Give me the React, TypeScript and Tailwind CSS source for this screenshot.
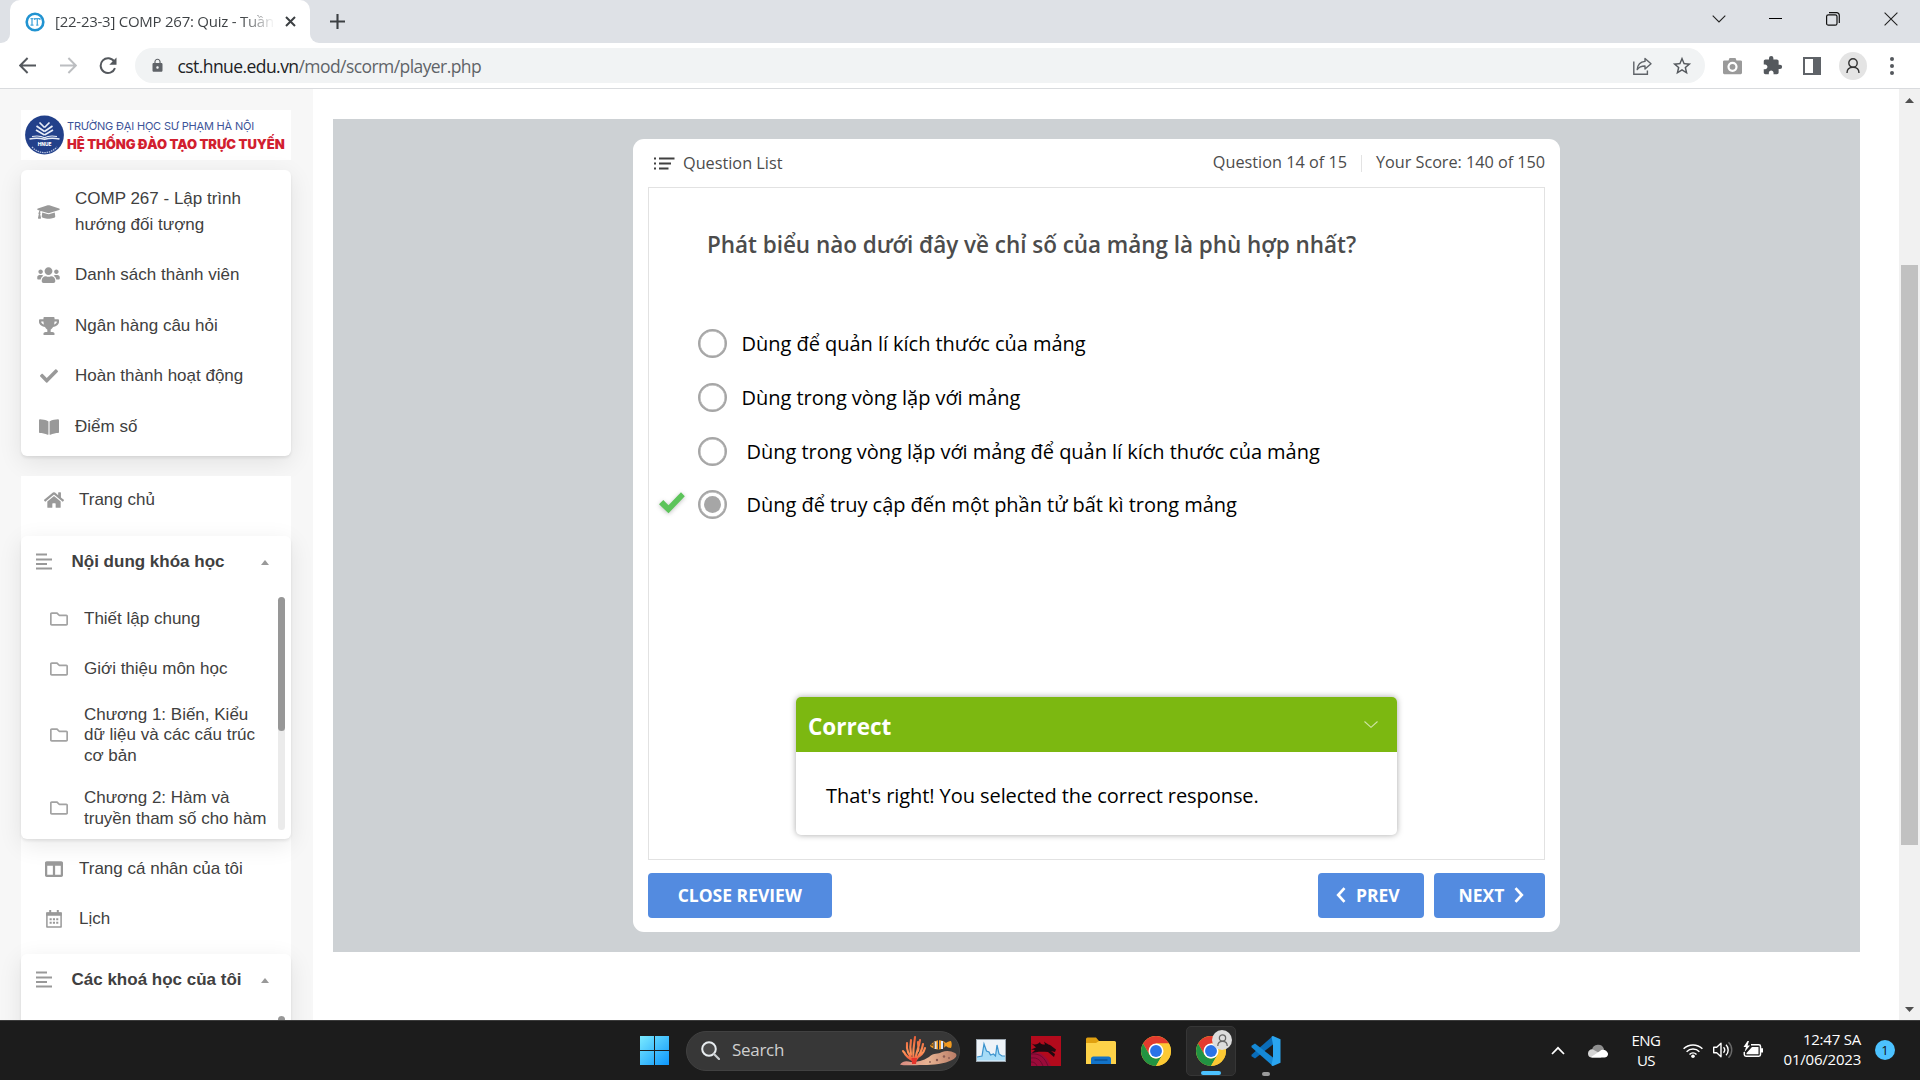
import React from "react";
import type { ReactNode } from "react";
import {
  FaBookOpen,
  FaCheck,
  FaColumns,
  FaGraduationCap,
  FaHome,
  FaRegFolder,
  FaTrophy,
  FaUsers,
} from "react-icons/fa";
import { MdExtension, MdLock, MdStarBorder } from "react-icons/md";

/* ---------- Browser chrome ---------- */

function TabStrip() {
  return (
    <div className="flex h-[43px] shrink-0 bg-[#dee1e6]">
      <div className="flex w-[10px] bg-white">
        <div className="w-full rounded-br-[9px] bg-[#dee1e6]" />
      </div>
      <div className="flex w-[300px] items-center rounded-t-[10px] bg-white pl-[15px]">
        <svg className="h-5 w-5 shrink-0" viewBox="0 0 20 20">
          <circle cx="10" cy="10" r="8.3" fill="#fff" stroke="#2193d1" strokeWidth="2.6" />
          <path d="M5.5 6.6h3M7 6.6v6.6M5.5 13.2h3M9.7 8V6.6h5.2V8M12.3 6.6v6.6M11.2 13.2h2.2" stroke="#48a7dc" strokeWidth="1.3" fill="none" />
        </svg>
        <span className="mb-[2px] ml-[10px] w-[220px] overflow-hidden bg-linear-to-r from-[#3c4043] from-85% to-transparent bg-clip-text text-[15px] leading-[22px] tracking-[-0.25px] whitespace-nowrap text-transparent">
          [22-23-3] COMP 267: Quiz - Tuần
        </span>
        <svg className="ml-[9.5px] h-[11px] w-[11px] shrink-0" viewBox="0 0 11 11">
          <path d="M1 1l9 9M10 1l-9 9" stroke="#3c4043" strokeWidth="2" />
        </svg>
      </div>
      <div className="flex w-[12px] bg-white">
        <div className="w-full rounded-bl-[9px] bg-[#dee1e6]" />
      </div>
      <svg className="mt-[14px] ml-[8px] h-[15px] w-[15px]" viewBox="0 0 15 15">
        <path d="M7.5 0v15M0 7.5h15" stroke="#3c4043" strokeWidth="2.1" />
      </svg>
      <div className="ml-auto flex h-[37px] items-center pr-[22px]">
        <svg className="h-[14px] w-[14px]" viewBox="0 0 14 14">
          <path d="M.7 3.7L7 10l6.3-6.3" stroke="#222" strokeWidth="1.1" fill="none" />
        </svg>
        <div className="ml-[43px] h-px w-[13px] bg-black" />
        <svg className="ml-[44px] h-[14px] w-[14px]" viewBox="0 0 14 14">
          <rect x=".6" y="2.8" width="10.4" height="10.4" rx="1.8" stroke="#111" strokeWidth="1.2" fill="none" />
          <path d="M3 .7h7.6a2.6 2.6 0 0 1 2.7 2.7V11" stroke="#111" strokeWidth="1.2" fill="none" />
        </svg>
        <svg className="ml-[44px] h-[14px] w-[14px]" viewBox="0 0 14 14">
          <path d="M.6.6l12.8 12.8M13.4.6L.6 13.4" stroke="#222" strokeWidth="1.1" />
        </svg>
      </div>
    </div>
  );
}

function Toolbar() {
  return (
    <div className="flex h-[46px] shrink-0 items-center border-b border-[#d9dbde] bg-white pl-[19px]">
      <svg className="h-[17px] w-[17px]" viewBox="0 0 17 17">
        <path d="M17 8.5H1.6M8.6 1L1.2 8.5 8.6 16" stroke="#54585d" strokeWidth="1.9" fill="none" />
      </svg>
      <svg className="ml-[24px] h-[17px] w-[17px]" viewBox="0 0 17 17">
        <path d="M0 8.5h15.4M8.4 1l7.4 7.5L8.4 16" stroke="#bcbec1" strokeWidth="1.9" fill="none" />
      </svg>
      <svg className="ml-[22px] h-[18px] w-[18px]" viewBox="0 0 18 18">
        <path d="M15.3 4.6A7.4 7.4 0 1 0 16 11.2" stroke="#54585d" strokeWidth="2" fill="none" />
        <path d="M17.5.6v7.2h-7.2z" fill="#54585d" />
      </svg>
      <div className="ml-[18px] flex h-[35px] w-[1570px] items-center rounded-full bg-[#f1f3f4] pl-[15px]">
        <MdLock className="h-[17px] w-[15px] text-[#5f6368]" />
        <span className="ml-[12.5px] text-[17.5px] leading-[24px] tracking-[-0.57px] whitespace-nowrap text-[#5f6368]">
          <span className="text-[#202124]">cst.hnue.edu.vn</span>/mod/scorm/player.php
        </span>
        <svg className="ml-auto h-[18px] w-[19px]" viewBox="0 0 19 18">
          <path d="M.8 4.5v12.7h13.6v-3.6" stroke="#5f6368" strokeWidth="1.4" fill="none" />
          <path d="M12 1.4l6 5.4-6 5.2V9C8.600 9 6 10 4.200 12.600 4.600 8.200 7.200 4.900 12 4.400z" stroke="#5f6368" strokeWidth="1.4" fill="none" strokeLinejoin="round" />
        </svg>
        <MdStarBorder className="mr-[12px] ml-[19px] h-[22px] w-[22px] text-[#54585d]" />
      </div>
      <svg className="ml-[18px] h-[18px] w-[19px]" viewBox="0 0 19 18">
        <path d="M6.500 1h6l1 2.500H17.500A1.400 1.400 0 0 1 19 5v10.800A1.400 1.400 0 0 1 17.500 17.200H1.500A1.400 1.400 0 0 1 0 15.800V5A1.400 1.400 0 0 1 1.500 3.500H5.500z" fill="#9a9a9a" />
        <circle cx="9.500" cy="9.800" r="4" fill="none" stroke="#fff" strokeWidth="2.200" />
      </svg>
      <MdExtension className="ml-[20px] h-[21px] w-[21px] text-[#54585d]" />
      <div className="ml-[20px] flex h-[18px] w-[18px] justify-end border-2 border-[#5f6368]">
        <div className="w-[6px] bg-[#5f6368]" />
      </div>
      <div className="ml-[18px] flex h-7 w-7 items-center justify-center rounded-full bg-[#e4e4e4]">
        <svg className="h-[15px] w-[14px]" viewBox="0 0 14 15">
          <circle cx="7" cy="5" r="4.200" stroke="#333" strokeWidth="1.400" fill="none" />
          <path d="M1 15c0-3.600 2.400-5.800 6-5.800s6 2.200 6 5.800" stroke="#333" strokeWidth="1.400" fill="none" />
        </svg>
      </div>
      <div className="ml-[23px] flex flex-col gap-[3px]">
        <span className="h-1 w-1 rounded-full bg-[#54585d]" />
        <span className="h-1 w-1 rounded-full bg-[#54585d]" />
        <span className="h-1 w-1 rounded-full bg-[#54585d]" />
      </div>
    </div>
  );
}

/* ---------- Sidebar ---------- */

function Logo() {
  return (
    <div className="flex h-[50px] shrink-0 items-center bg-white pl-[4px]">
      <svg className="h-[40px] w-[39px] shrink-0" viewBox="0 0 39 40">
        <circle cx="19.500" cy="20" r="19.400" fill="#22408a" />
        <g fill="none" stroke="#e8edf7" strokeWidth="1.700">
          <path d="M19.500 12.500L14.500 7.500M19.500 12.500L24.500 7.500M19.500 16.500L11.500 11M19.500 16.500L27.500 11M19.500 20L11 15M19.500 20L28 15" />
          <path d="M4.500 24c5-1 11-.800 15 .300 4-1.100 10-1.300 15-.300" strokeWidth="1.600" />
          <path d="M7 21.500c4.500-.800 9.500-.400 12.500 1.200 3-1.600 8-2 12.500-1.200" strokeWidth="1.200" />
          <path d="M7 32c7 7.500 18 7.500 25 0" strokeWidth="1.300" strokeDasharray="1.500 .8" stroke="#b9c5e2" />
        </g>
        <text x="19.500" y="31" fontSize="4.800" fontWeight="800" fill="#fff" textAnchor="middle" fontFamily="Inter, sans-serif">HNUE</text>
      </svg>
      <div className="ml-[3px] flex flex-col font-['Inter',sans-serif] whitespace-nowrap">
        <span className="text-[11px] leading-[18px] tracking-[-0.180px] text-[#3d5498]">
          TRƯỜNG ĐẠI HỌC SƯ PHẠM HÀ NỘI
        </span>
        <span className="text-[13px] leading-[18px] font-black tracking-[-0.050px] text-[#d2202f]">
          HỆ THỐNG ĐÀO TẠO TRỰC TUYẾN
        </span>
      </div>
    </div>
  );
}

function CourseLink({ icon, children, tall }: { icon: ReactNode; children: ReactNode; tall?: boolean }) {
  return (
    <div className={`flex items-center ${tall ? "h-[76px]" : "h-[50.5px]"}`}>
      <span className="ml-[13px] flex w-[29px] justify-center text-[#999]">{icon}</span>
      <span className="ml-[12px] leading-[26px]">{children}</span>
    </div>
  );
}

function NavLink({ icon, children }: { icon: ReactNode; children: ReactNode }) {
  return (
    <div className="flex h-[50px] items-center">
      <span className="ml-[20px] flex w-[26px] justify-center text-[#999]">{icon}</span>
      <span className="ml-[12px]">{children}</span>
    </div>
  );
}

function SectionHeader({ children }: { children: ReactNode }) {
  return (
    <div className="flex h-[51px] items-center pl-[15px] font-bold">
      <svg className="mb-[1px] h-[17px] w-[16px] text-[#999]" viewBox="0 0 16 17">
        <path d="M0 1.500h11M0 6.500h16M0 11h11M0 15.500h16" stroke="currentColor" strokeWidth="2" />
      </svg>
      <span className="ml-[19.500px]">{children}</span>
      <svg className="mt-[2px] mr-[22px] ml-auto h-[5px] w-[8px]" viewBox="0 0 8 5">
        <path d="M4 0l4 5H0z" fill="#999" />
      </svg>
    </div>
  );
}

function FolderRow({ children, size }: { children: ReactNode; size: "one" | "two" | "three" }) {
  const heights = { one: "h-[50px]", two: "h-[63px]", three: "h-[82px]" };
  const nudges = { one: "", two: "pt-[2px]", three: "pt-[1px]" };
  return (
    <div className={`flex items-center ${heights[size]}`}>
      <FaRegFolder className="ml-[29px] h-[18px] w-[18px] shrink-0 text-[#a3a3a3]" />
      <span className={`ml-[16px] leading-[20.400px] whitespace-nowrap ${nudges[size]}`}>{children}</span>
    </div>
  );
}

const CARD = "shrink-0 rounded-[6px] bg-white shadow-[0_2px_3px_rgba(0,0,0,0.08),0_6px_24px_rgba(0,0,0,0.09)]";

function Sidebar() {
  return (
    <aside className="flex w-[313px] shrink-0 flex-col overflow-hidden bg-[#f7f7f7] pt-[21px] pr-[22px] pl-[21px] font-['Liberation_Sans',sans-serif] text-[17px] text-[#404040]">
      <Logo />
      <div className={`mt-[10px] h-[286px] pt-[4px] ${CARD}`}>
        <CourseLink tall icon={<FaGraduationCap className="h-[18px] w-[23px]" />}>
          COMP 267 - Lập trình
          <br />
          hướng đối tượng
        </CourseLink>
        <CourseLink icon={<FaUsers className="h-[18px] w-[23px]" />}>Danh sách thành viên</CourseLink>
        <CourseLink icon={<FaTrophy className="h-[18px] w-[20px]" />}>Ngân hàng câu hỏi</CourseLink>
        <CourseLink icon={<FaCheck className="h-[18px] w-[18px]" />}>Hoàn thành hoạt động</CourseLink>
        <CourseLink icon={<FaBookOpen className="h-[18px] w-[20px]" />}>Điểm số</CourseLink>
      </div>

      <div className="mt-[20px] flex h-[700px] shrink-0 flex-col bg-white">
        <div className="h-[60px] shrink-0">
          <div className="-mt-px">
            <NavLink icon={<FaHome className="h-[18px] w-[20px]" />}>Trang chủ</NavLink>
          </div>
        </div>
        <div className={`h-[303px] ${CARD}`}>
          <SectionHeader>Nội dung khóa học</SectionHeader>
          <div className="flex pt-[7px]">
            <div className="w-[257px]">
              <FolderRow size="one">Thiết lập chung</FolderRow>
              <FolderRow size="one">Giới thiệu môn học</FolderRow>
              <FolderRow size="three">
                Chương 1: Biến, Kiểu
                <br />
                dữ liệu và các cấu trúc
                <br />
                cơ bản
              </FolderRow>
              <FolderRow size="two">
                Chương 2: Hàm và
                <br />
                truyền tham số cho hàm
              </FolderRow>
            </div>
            <div className="mt-[3px] h-[233px] w-[7px] rounded-full bg-[#ebebeb]">
              <div className="h-[134px] rounded-full bg-[#979797]" />
            </div>
          </div>
        </div>
        <div className="mt-[5px]">
          <NavLink icon={<FaColumns className="h-[18px] w-[18px]" />}>Trang cá nhân của tôi</NavLink>
          <NavLink
            icon={
              <svg className="h-[18px] w-[16px]" viewBox="0 0 16 18">
                <path d="M.900 3.200h14.200v13.900H.900z" fill="none" stroke="currentColor" strokeWidth="1.500" strokeLinejoin="round" />
                <path d="M.300 2.300h15.400v3.500H.300zM3.200 0h2v3h-2zM10.800 0h2v3h-2z" fill="currentColor" />
                <path d="M3.600 8.300h2.100v2H3.600zM6.900 8.300H9v2H6.900zM10.200 8.300h2.100v2h-2.100zM3.600 11.700h2.100v2H3.600zM6.900 11.700H9v2H6.900zM10.200 11.700h2.100v2h-2.100z" fill="currentColor" />
              </svg>
            }
          >
            Lịch
          </NavLink>
        </div>
        <div className={`mt-[10px] h-[150px] ${CARD}`}>
          <SectionHeader>Các khoá học của tôi</SectionHeader>
          <div className="mt-[11px] ml-[257px] h-[80px] w-[7px] rounded-full bg-[#979797]" />
        </div>
      </div>
    </aside>
  );
}

/* ---------- Quiz ---------- */

function Answer({ children, selected, wide }: { children: ReactNode; selected?: boolean; wide?: boolean }) {
  return (
    <div className="flex h-[53.700px] items-center">
      <span className="flex w-[49px] pl-[9px]">
        {selected && (
          <svg className="-mt-[4px] h-[28px] w-[28px] drop-shadow-[0_1px_2px_rgba(0,0,0,0.25)]" viewBox="0 0 28 28">
            <path d="M1 15.200l4.300-4.200 5.200 5.200L23 3.200l3.800 4L10.500 24.200z" fill="#5cc45a" />
          </svg>
        )}
      </span>
      <span className="flex h-[29px] w-[29px] items-center justify-center rounded-full border-2 border-[#a6a6a6] ring-[0.500px] ring-[#a6a6a6] ring-inset">
        {selected && <span className="h-[17px] w-[17px] rounded-full bg-[#a6a6a6]" />}
      </span>
      <span className={`text-[20px] leading-[27px] tracking-[-0.035px] text-black ${wide ? "ml-[19.500px]" : "ml-[14.500px]"}`}>
        {children}
      </span>
    </div>
  );
}

const BUTTON =
  "flex h-[45px] items-center rounded-[4px] bg-[#538be0] text-[17.500px] leading-[24px] font-bold text-white";

function Quiz() {
  return (
    <div className="mt-[30px] ml-[20px] flex h-[833px] w-[1527px] justify-center bg-[#cdd1d4] pt-[20px]">
      <div className="flex h-[793px] w-[927px] flex-col rounded-[11px] bg-white px-[15px]">
        <div className="flex h-[48px] items-center text-[16.250px] text-[#4c4c4c]">
          <svg className="ml-[6px] h-[13px] w-[21px]" viewBox="0 0 21 13">
            <path d="M0 1.500h2M5 1.500h15.500M0 6.500h2M5 6.500h12M0 11.500h2M5 11.500h9.500" stroke="#404040" strokeWidth="1.900" />
          </svg>
          <span className="ml-[8px]">Question List</span>
          <span className="mb-[2px] ml-auto">Question 14 of 15</span>
          <span className="mx-[14px] h-[17px] w-px bg-[#e3e3e3]" />
          <span className="mb-[2px] tracking-[-0.040px]">Your Score: 140 of 150</span>
        </div>
        <div className="flex h-[673px] flex-col border border-[#e2e2e2]">
          <h1 className="mt-[42px] ml-[58px] text-[22.500px] leading-[30px] font-semibold tracking-[-0.040px] whitespace-nowrap text-[#4c4c4c]">
            Phát biểu nào dưới đây về chỉ số của mảng là phù hợp nhất?
          </h1>
          <div className="mt-[57px] flex flex-col">
            <Answer>Dùng để quản lí kích thước của mảng</Answer>
            <Answer>Dùng trong vòng lặp với mảng</Answer>
            <Answer wide>Dùng trong vòng lặp với mảng để quản lí kích thước của mảng</Answer>
            <Answer wide selected>Dùng để truy cập đến một phần tử bất kì trong mảng</Answer>
          </div>
          <div className="mt-auto mb-[24px] ml-[147px] flex h-[138px] w-[601px] flex-col rounded-[5px] bg-white shadow-[0_0_6px_rgba(0,0,0,0.35)]">
            <div className="flex h-[55px] items-center rounded-t-[5px] bg-[#7cb811] pr-[19px] pl-[12px] text-[22.500px] font-bold text-white">
              <span className="mt-[4px]">Correct</span>
              <svg className="ml-auto h-[7px] w-[14px]" viewBox="0 0 14 7">
                <path d="M.500.500L7 6.300 13.500.500" stroke="#cfe5a5" strokeWidth="1.100" fill="none" />
              </svg>
            </div>
            <div className="mt-[30px] ml-[30px] text-[20px] leading-[27px] tracking-[-0.070px] text-black">
              That's right! You selected the correct response.
            </div>
          </div>
        </div>
        <div className="mt-[12.500px] flex">
          <div className={`w-[183.500px] justify-center ${BUTTON}`}>CLOSE REVIEW</div>
          <div className={`ml-auto w-[105.500px] pl-[18px] ${BUTTON}`}>
            <svg className="mr-[10px] h-[16px] w-[10px]" viewBox="0 0 10 16">
              <path d="M8.500 1.200L2.200 8l6.300 6.800" stroke="#fff" strokeWidth="2.700" fill="none" />
            </svg>
            PREV
          </div>
          <div className={`ml-[10px] w-[111.500px] pl-[25px] ${BUTTON}`}>
            NEXT
            <svg className="ml-[10px] h-[16px] w-[10px]" viewBox="0 0 10 16">
              <path d="M1.500 1.200L7.800 8l-6.300 6.800" stroke="#fff" strokeWidth="2.700" fill="none" />
            </svg>
          </div>
        </div>
      </div>
    </div>
  );
}

function PageScrollbar() {
  return (
    <div className="ml-auto flex w-[21px] shrink-0 flex-col items-center bg-[#f1f1f1]">
      <svg className="mt-[9px] h-[5px] w-[9px]" viewBox="0 0 9 5">
        <path d="M4.500 0L9 5H0z" fill="#505050" />
      </svg>
      <div className="mt-[162px] h-[580px] w-[17px] bg-[#c1c1c1]" />
      <svg className="mt-auto mb-[8px] h-[5px] w-[9px]" viewBox="0 0 9 5">
        <path d="M0 0h9L4.500 5z" fill="#505050" />
      </svg>
    </div>
  );
}

/* ---------- Taskbar ---------- */

function ChromeLogo() {
  return (
    <svg className="h-[30px] w-[30px] shrink-0" viewBox="0 0 48 48">
      <circle cx="24" cy="24" r="24" fill="#fcc934" />
      <path d="M24 12h20.780A24 24 0 0 0 3.220 12l10.390 18z" fill="#e33b2e" />
      <path d="M34.390 30L24 48A24 24 0 0 1 3.220 12l10.390 18a12 12 0 0 0 20.780 0z" fill="#229342" />
      <path d="M44.780 12H24l10.390 18L24 48a24 24 0 0 0 20.780-36z" fill="#fcc934" />
      <circle cx="24" cy="24" r="12" fill="#fff" />
      <circle cx="24" cy="24" r="9.500" fill="#2a73e8" />
    </svg>
  );
}

function Coral() {
  return (
    <svg className="h-[32px] w-[58px]" viewBox="0 0 58 32">
      <defs>
        <linearGradient id="sand" x1="0" x2="1">
          <stop offset="0" stopColor="#d98a80" />
          <stop offset=".5" stopColor="#e9b493" />
          <stop offset="1" stopColor="#b97c66" />
        </linearGradient>
        <linearGradient id="coral" gradientUnits="userSpaceOnUse" x1="0" y1="2" x2="0" y2="28">
          <stop offset="0" stopColor="#e8603a" />
          <stop offset=".6" stopColor="#ff9358" />
          <stop offset="1" stopColor="#e8402f" />
        </linearGradient>
      </defs>
      <path d="M1 29.500c3-4 7-3.500 11-2.500 6 0 12-1 18-5 5-5 9-2 13-5 5-2 9-1 13 1 3 2 1 5-3 7-7 4-19 5-29 5-8 0-18 1-23-.500z" fill="url(#sand)" />
      <g stroke="url(#coral)" fill="none" strokeLinecap="round" strokeWidth="2.100">
        <path d="M15 27C13 19 15 11 16 2M15 26C10 21 7 16 8 8M15 26c-4-2-8-4-10-9M16 26c1-8 4-14 5-21M16 26c5-6 7-10 8-17M12 20C11 14 11 10 12 5M17 23c5-2 8-6 9-10M7 20c-2-2-2-3-3-4M19 16c1-3 0-6 0-9" />
      </g>
      <path d="M12.500 23h5.500l-1 6h-4z" fill="#e5352c" />
      <path d="M31 11c3-6 11-8 16-3 1-1 3-2 5-2 1 2 1 5 0 7-2 0-4-1-5-2-4 5-12 4-16 0z" fill="#f29a1f" />
      <path d="M36.500 6.500v7.500M43 6v8" stroke="#dce6f5" strokeWidth="2" />
      <path d="M35 7v6.500M44.700 7.500v5.500M39.500 5v9.500" stroke="#23304d" strokeWidth="1" />
      <circle cx="33" cy="10" r=".8" fill="#111" />
      <circle cx="38" cy="25" r="1.200" fill="#8a5b52" />
      <circle cx="45" cy="21.500" r="1.200" fill="#8a5b52" />
      <circle cx="50" cy="23" r=".9" fill="#8a5b52" />
      <circle cx="31" cy="27" r=".9" fill="#8a5b52" />
    </svg>
  );
}

function Taskbar() {
  return (
    <div className="flex h-[60px] shrink-0 items-center border-t border-[#3b3b3b] bg-[#1c1c1c] pl-[640px] text-white">
      <svg className="h-[29px] w-[29px] shrink-0" viewBox="0 0 29 29">
        <defs>
          <linearGradient id="win" gradientUnits="userSpaceOnUse" x1="0" y1="0" x2="29" y2="29">
            <stop offset="0" stopColor="#7aeaff" />
            <stop offset="1" stopColor="#0d96fb" />
          </linearGradient>
        </defs>
        <path d="M0 0h14v14H0zM15 0h14v14H15zM0 15h14v14H0zM15 15h14v14H15z" fill="url(#win)" />
      </svg>
      <div className="ml-[17px] flex h-[40px] w-[274px] shrink-0 items-center rounded-full border border-[#414141] bg-[#373737]">
        <svg className="ml-[14px] h-[19px] w-[19px]" viewBox="0 0 19 19">
          <circle cx="8" cy="8" r="6.800" fill="#4a4a4a" stroke="#e8edf0" strokeWidth="2" />
          <path d="M13 13l5 5" stroke="#c9cdd0" strokeWidth="2.200" strokeLinecap="round" />
        </svg>
        <span className="mb-px ml-[12px] text-[17px] leading-[24px] tracking-[-0.300px] text-[#cfcfcf]">Search</span>
        <div className="mr-[2px] ml-auto">
          <Coral />
        </div>
      </div>
      <svg className="ml-[16px] h-[23px] w-[30px] shrink-0" viewBox="0 0 30 23">
        <rect x=".500" y=".500" width="29" height="22" fill="#eef3f8" stroke="#9aa4ad" />
        <path d="M1 21.500V18l5-1 2-12 2.500 7 2.500 1 1.500 3 3-1 2 2 1.500-11 2 9 3 2 3 0v4.500z" fill="#a6dcf7" />
        <path d="M1 18l5-1 2-12 2.500 7 2.500 1 1.500 3 3-1 2 2 1.500-11 2 9 3 2h3" fill="none" stroke="#3d93cd" strokeWidth="1.200" />
      </svg>
      <svg className="ml-[25px] h-[30px] w-[30px] shrink-0" viewBox="0 0 30 30">
        <rect width="30" height="30" fill="#b30a1c" />
        <path d="M0 16c8-1 16 4 20 14H0z" fill="#9b0b3a" />
        <path d="M0 7c4 3 7 1 9-1 0 2 2 2.500 5 2.500l-1-3c3 3 6 3 8 5l4 3-1 2.500-4-1 4 3-1 3-6-5c-5 0-12-1-17 2l4-4-4-.500 5-2z" fill="#1f0a10" />
        <path d="M0 18c9-1 14 4 17 12M0 22c7-1 10 3 12 8M0 26c4 0 5 2 6 4" stroke="#6d0a2c" strokeWidth="1" fill="none" />
      </svg>
      <svg className="ml-[25px] h-[28px] w-[30px] shrink-0" viewBox="0 0 30 28">
        <path d="M0 2a1.500 1.500 0 0 1 1.500-1.500H10L13 4v6H0z" fill="#e0a010" />
        <path d="M0 6h10l3-2h15.500A1.500 1.500 0 0 1 30 5.500V27H0z" fill="#fdd249" />
        <path d="M5 27v-5a2.500 2.500 0 0 1 2.500-2.500h15A2.500 2.500 0 0 1 25 22v5z" fill="#1273c9" />
        <path d="M8.500 23h13" stroke="#0a4a8a" strokeWidth="1.200" />
      </svg>
      <div className="ml-[25px] shrink-0">
        <ChromeLogo />
      </div>
      <div className="relative ml-[15px] flex h-[50px] w-[50px] shrink-0 items-center justify-center rounded-[5px] border border-[#363636] bg-[#2a2a2a]">
        <ChromeLogo />
        <span className="absolute top-[3px] left-[25px] flex h-5 w-5 items-center justify-center rounded-full bg-[#dcdcdc]">
          <svg className="h-[12px] w-[11px]" viewBox="0 0 14 15">
            <circle cx="7" cy="5" r="4" stroke="#666" strokeWidth="1.600" fill="none" />
            <path d="M1 15c0-3.600 2.400-5.800 6-5.800s6 2.200 6 5.800" stroke="#666" strokeWidth="1.600" fill="none" />
          </svg>
        </span>
        <span className="absolute bottom-0 left-[14px] h-[4px] w-[20px] rounded-full bg-[#4cc2ff]" />
      </div>
      <div className="relative ml-[15px] h-[50px] w-[30px] shrink-0 pt-[10px]">
        <svg className="h-[30px] w-[30px]" viewBox="0 0 30 30">
          <path d="M22 0v8.500L4 22.500 0.500 20.200v-1.500z" fill="#0a6cb8" />
          <path d="M22 30v-8.500L4 7.500.500 9.800v1.500z" fill="#1589d6" />
          <path d="M22 0l7.500 3.200v23.600L22 30c-.800 0-1.200-.400-1.500-.800L22 21.500v-13L20.500.800C21 .200 21.500 0 22 0z" fill="#2aa5f0" />
        </svg>
        <span className="absolute bottom-0 left-[11px] h-[4px] w-[8px] rounded-full bg-[#9a9a9a]" />
      </div>

      <div className="mr-[25px] ml-auto flex items-center text-[15px] leading-[20px]">
        <svg className="h-[9px] w-[14px]" viewBox="0 0 14 9">
          <path d="M1 8l6-6.200L13 8" stroke="#fff" strokeWidth="1.700" fill="none" />
        </svg>
        <svg className="ml-[23px] h-[14px] w-[20px]" viewBox="0 0 20 14">
          <path d="M4 6a6.200 6.200 0 0 1 12-1l-1 4H4z" fill="#8f8f8f" />
          <path d="M0 9.500A4 4 0 0 1 5 5.500l10 5.500-2 2.500H4a4 4 0 0 1-4-4z" fill="#d5d5d5" />
          <path d="M3 13l9-6c2-2.500 7-1.500 8 2.500.3 2.500-1.500 4-3.500 4H4z" fill="#fff" />
        </svg>
        <div className="mb-[2px] ml-[23px] w-[30px] text-center tracking-[-0.500px]">
          <div>ENG</div>
          <div>US</div>
        </div>
        <svg className="mb-px ml-[22px] h-[15px] w-[20px]" viewBox="0 0 20 15">
          <g fill="none" stroke="#fff" strokeWidth="1.500">
            <path d="M.600 5.800a13.300 13.300 0 0 1 18.800 0M3.600 8.700a9 9 0 0 1 12.800 0M6.500 11.500a5 5 0 0 1 7 0" />
          </g>
          <circle cx="10" cy="13.200" r="1.800" fill="#fff" />
        </svg>
        <svg className="mb-px ml-[10px] h-[18px] w-[20px]" viewBox="0 0 20 18">
          <path d="M.700 6.200h3L8 2.300v13.400l-4.300-3.900h-3z" fill="none" stroke="#fff" strokeWidth="1.400" strokeLinejoin="round" />
          <path d="M10.500 6.300a4 4 0 0 1 0 5.400M13 3.800a7.300 7.300 0 0 1 0 10.400" fill="none" stroke="#fff" strokeWidth="1.400" />
          <path d="M15.500 1.300a10.800 10.800 0 0 1 0 15.400" fill="none" stroke="#6a6a6a" strokeWidth="1.400" />
        </svg>
        <svg className="mb-[2px] ml-[10px] h-[17px] w-[20px]" viewBox="0 0 20 17">
          <path d="M8 3.700h7.800a1.700 1.700 0 0 1 1.700 1.700v8.100a1.700 1.700 0 0 1-1.700 1.700H3a1.700 1.700 0 0 1-1.700-1.700V11" fill="none" stroke="#fff" strokeWidth="1.500" />
          <path d="M17.500 7.200H20v4.400h-2.500zM3.500 13.300V12L9 6h6.500v7.300z" fill="#fff" />
          <path d="M4.500 0L.500 6h2.500L1.500 11 7 4.500H4.500L6 0z" fill="#fff" />
        </svg>
        <div className="mb-[4px] ml-[16px] w-[82px] text-right tracking-[-0.220px] whitespace-nowrap">
          <div>12:47 SA</div>
          <div>01/06/2023</div>
        </div>
        <span className="mb-px ml-[14px] flex h-5 w-5 items-center justify-center rounded-full bg-[#4cc2ff] text-[13px] text-[#111]">
          1
        </span>
      </div>
    </div>
  );
}

export default function App() {
  return (
    <div className="flex h-[1080px] w-[1920px] flex-col overflow-hidden bg-white font-['Open_Sans','Noto_Sans',sans-serif]">
      <TabStrip />
      <Toolbar />
      <main className="flex min-h-0 flex-1 bg-white">
        <Sidebar />
        <Quiz />
        <PageScrollbar />
      </main>
      <Taskbar />
    </div>
  );
}
